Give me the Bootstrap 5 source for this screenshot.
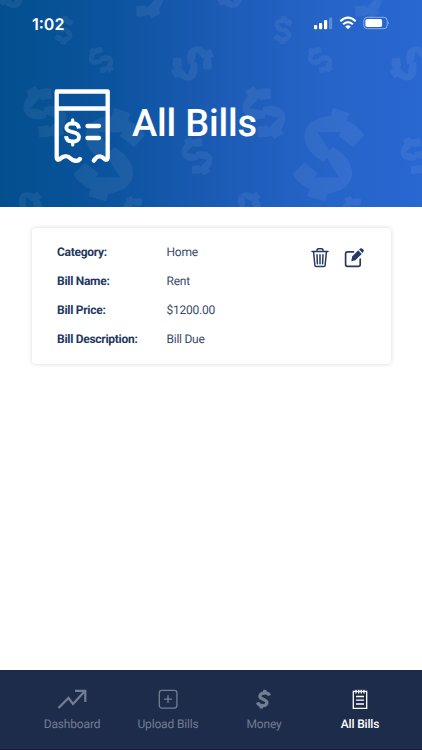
<!DOCTYPE html>
<html lang="en">
<head>
<meta charset="utf-8">
<meta name="viewport" content="width=device-width, initial-scale=1">
<title>All Bills</title>
<link href="https://cdn.jsdelivr.net/npm/bootstrap@5.3.0/dist/css/bootstrap.min.css" rel="stylesheet">
<style>
body{font-family:Roboto,"Liberation Sans",sans-serif;color:#273a61;height:750px;overflow:hidden;text-rendering:geometricPrecision}
svg{display:block;flex:none}
.hero{height:207px;background:linear-gradient(90deg,#034f8e 0%,#0b539d 25%,#1c5bb5 52%,#2664c9 78%,#2967d1 100%)}
.hero-pattern{inset:0;opacity:.058}
.status{height:46px;padding:0 32px 0 32px}
.clock{font:600 16px/46px Inter,Roboto,sans-serif;padding-top:1px}
.signals{gap:6px}
.hero-title{padding:42px 0 0 53px;gap:21px}
.hero-title h1{font-size:38px;line-height:46px;font-weight:500;letter-spacing:-.2px;margin-top:13px}
.bill{margin:21px 31px 0 32px;height:136px;border-radius:4px;box-shadow:0 0 4px rgba(0,0,0,.17);padding:10px 25px}
.bill dl{font-size:12px;line-height:29px;width:230px}
.bill dt{width:109.5px;font-weight:700;color:#243761;letter-spacing:-.28px}
.bill dd{color:#394a6d;letter-spacing:-.25px}
.acts{gap:15px;padding-top:10px}
.tabs{height:80px;background:#1e2c4b;padding:15px 14px 0 24px;border-bottom:1px solid #171a3a}
.tab-item{width:96px;color:#707c91;font-size:12px;line-height:16px;letter-spacing:-.15px;text-decoration:none}
.tab-item svg{margin-bottom:2px}
.tab-item.current{color:#fff;font-weight:500}
</style>
<script src="https://cdn.jsdelivr.net/npm/bootstrap@5.3.0/dist/js/bootstrap.bundle.min.js"></script>
</head>
<body class="d-flex flex-column bg-white">
<header class="hero position-relative overflow-hidden text-white">
  <svg class="hero-pattern position-absolute" width="422" height="207" viewBox="0 0 422 207" fill="#fff" aria-hidden="true">
    <defs>
      <path id="coin" transform="scale(.3333) translate(-146 -178)" d="M160 38L208 54L202 77C225 88 240 100 253 120L220 156L176 122L184 111H112C125 130 140 150 148 168L159 156C190 170 215 200 217 232C216 262 200 285 142 297L136 318L82 303L90 282C68 272 52 260 38 238L73 202L114 236L104 247H179C165 230 155 215 142 188L132 200C95 180 75 155 74 125C76 90 100 65 152 63Z"/>
      <g id="tile">
        <use href="#coin" transform="translate(109.5 154.5)"/>
        <use href="#coin" transform="translate(45 112.5) rotate(-47) scale(.61)"/>
        <use href="#coin" transform="translate(101 60) rotate(-60) scale(.33)"/>
        <use href="#coin" transform="translate(64 30) rotate(-12) scale(.31)"/>
        <use href="#coin" transform="translate(192.5 63.5) rotate(45) scale(.49)"/>
        <use href="#coin" transform="translate(197 156) rotate(-45) scale(.44)"/>
        <use href="#coin" transform="translate(25 208) rotate(30) scale(.43)"/>
        <use href="#coin" transform="translate(136 214) rotate(-40) scale(.4)"/>
        <use href="#coin" transform="translate(143 -7) rotate(-45) scale(.58)"/>
        <use href="#coin" transform="translate(18 -8) rotate(45) scale(.46)"/>
      </g>
    </defs>
    <use href="#tile" x="-219"/><use href="#tile"/><use href="#tile" x="219"/>
  </svg>
  <div class="position-relative">
    <div class="status d-flex justify-content-between align-items-center">
      <span class="clock">1:02</span>
      <div class="signals d-flex align-items-center">
        <svg width="20" height="14" viewBox="0 0 20 14" fill="#fff"><rect x="1" y="9" width="3.2" height="4.2" rx="1"/><rect x="6" y="7" width="3.2" height="6.2" rx="1"/><rect x="11" y="4" width="3.2" height="9.2" rx="1"/><rect x="16" y="1.5" width="3.2" height="11.7" rx="1" opacity=".25"/></svg>
        <svg width="18" height="14" viewBox="0 0 18 14" fill="none" stroke="#fff" stroke-width="2.1"><path d="M1.3 5.3Q9-1.9 16.7 5.3M4.1 8.3Q9 3.9 13.9 8.3"/><path d="M6.2 10.4Q9 8 11.8 10.4L9 13.2Z" fill="#fff" stroke="none"/></svg>
        <svg width="27" height="14" viewBox="0 0 27 14"><rect x=".8" y="1.3" width="23.4" height="11.4" rx="3.4" fill="none" stroke="#fff" stroke-opacity=".45"/><rect x="2.4" y="2.9" width="16.7" height="8.2" rx="1.8" fill="#fff"/><path d="M25.3 5.2Q27 7 25.3 8.8Z" fill="#fff" opacity=".55"/></svg>
      </div>
    </div>
    <div class="hero-title d-flex">
      <svg width="58" height="76" viewBox="0 0 58 76" fill="none" stroke="#fff" stroke-width="4.3" stroke-linecap="round" stroke-linejoin="round">
        <path d="M27 71C24.5 74 20 73 17 70C14 67 10 68.5 7.500 70.500C5.500 72.500 3.700 72 3.700 69V3.500H54.700V69C54.700 72 53 72.500 51 70.500C48 67.500 44.500 68 42.500 70.500L40.800 72.500M4 20.500H54"/>
        <path d="M34.500 38H46M34.500 50H46"/>
        <path stroke-width="3.900" stroke-linecap="butt" d="M26 40.500C25.500 36.500 22.500 35.300 19.700 35.300C16 35.300 13.300 37.200 13.300 39.700C13.300 42.500 16 43.300 19.700 44.200C23.500 45.100 26 46.200 26 49C26 51.800 23.500 53.600 19.700 53.600C16 53.600 13.200 51.800 13 48.200"/>
        <path stroke-width="3.200" d="M19.700 31.800V36M19.700 53V57"/>
      </svg>
      <h1>All Bills</h1>
    </div>
  </div>
</header>
<main class="flex-grow-1">
  <section class="bill d-flex bg-white justify-content-between">
    <dl class="mb-0">
      <div class="d-flex"><dt>Category:</dt><dd class="mb-0">Home</dd></div>
      <div class="d-flex"><dt>Bill Name:</dt><dd class="mb-0">Rent</dd></div>
      <div class="d-flex"><dt>Bill Price:</dt><dd class="mb-0">$1200.00</dd></div>
      <div class="d-flex"><dt>Bill Description:</dt><dd class="mb-0">Bill Due</dd></div>
    </dl>
    <div class="acts d-flex">
      <svg width="18" height="20" viewBox="0 0 18 20" fill="none" stroke="#273a61" stroke-width="1.500" stroke-linecap="round" stroke-linejoin="round"><path d="M1 3.600H17M6 3.300V2Q6 .8 7.200.8H10.800Q12 .8 12 2V3.300M2.600 4L3.900 17.500Q4 18.600 5.200 18.600H12.800Q14 18.600 14.100 17.500L15.400 4M9 6.800V15.800M6 6.800L6.400 15.800M12 6.800L11.600 15.800"/></svg>
      <svg width="22" height="20" viewBox="0 0 22 20"><path d="M9.500 3.800H3.500Q1.600 3.800 1.600 5.700V16.500Q1.600 18.400 3.500 18.400H14.300Q16.200 18.400 16.200 16.500V11" fill="none" stroke="#273a61" stroke-width="1.700" stroke-linecap="round"/><path d="M14.200 2.300L17.800 5.900L11.400 12.200L7.300 13.200L8.100 8.500ZM15.100 1.500L16.100.6Q17.400-.2 18.500.8L19.300 1.600Q20.300 2.700 19.300 3.900L18.500 4.900Z" fill="#273a61"/></svg>
    </div>
  </section>
</main>
<nav class="tabs d-flex">
  <a class="tab-item d-flex flex-column align-items-center" href="#"><svg width="32" height="29" viewBox="0 0 32 29" fill="none" stroke="#727e92" stroke-width="2.200"><path d="M2.500 23L12.500 13L17 19L29 6M19 5.800H29.300V17"/></svg>Dashboard</a>
  <a class="tab-item d-flex flex-column align-items-center" href="#"><svg width="20" height="29" viewBox="0 0 20 29" fill="none" stroke="#727e92" stroke-width="1.300"><rect x="1.300" y="5.300" width="17.600" height="17.800" rx="2.500"/><path d="M10 10.300V18.100M6.100 14.200H13.900"/></svg>Upload Bills</a>
  <a class="tab-item d-flex flex-column align-items-center" href="#"><svg width="18" height="29" viewBox="0 0 16 29" fill="none" stroke="#727e92"><path stroke-width="3.300" d="M13.500 10.500C12.500 8 10 7.700 7.800 8C4.800 8.400 3.400 10.300 4 12C4.600 14 10.300 14.600 10.900 17C11.300 19.300 9.200 20.600 6.800 20.700C4 20.800 2.500 19.800 1.500 17.300"/><path stroke-width="3.300" d="M9.100 4.800L8.300 8M5.900 20L5.100 23.500"/></svg>Money</a>
  <a class="tab-item current d-flex flex-column align-items-center" href="#"><svg width="16" height="29" viewBox="0 0 16 29" fill="none" stroke="#fff" stroke-width="1.300"><path d="M1.300 6.400H14.700V23.300H1.300ZM4 4.800V8.500M6.700 4.800V8.500M9.300 4.800V8.500M12 4.800V8.500M4 11.500H12M4 15.200H12M4 19H12"/></svg>All Bills</a>
</nav>
</body>
</html>
